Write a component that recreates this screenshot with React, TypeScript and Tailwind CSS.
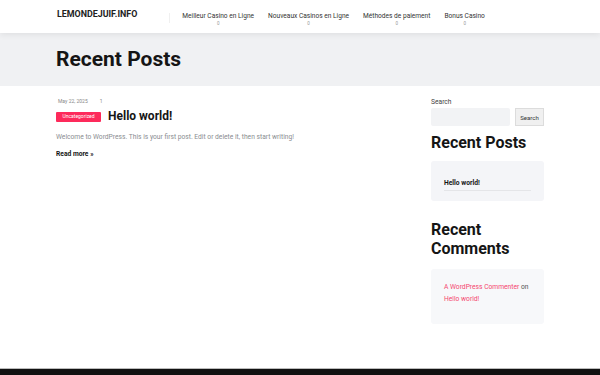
const navItems = [
  'Meilleur Casino en Ligne',
  'Nouveaux Casinos en Ligne',
  'Méthodes de paiement',
  'Bonus Casino',
]

export default function App() {
  return (
    <div className="min-h-screen bg-white font-['Roboto',sans-serif] text-[#111]">
      {/* header */}
      <header className="relative z-10 h-[33px] bg-white shadow-[0_2px_6px_rgba(0,0,0,0.07)]">
        <div className="mx-[56px] flex h-full items-start">
          <div className="mt-[8px] ml-[1px] text-[8.9px] font-bold leading-[12px] text-[#222]">
            LEMONDEJUIF.INFO
          </div>
          <div className="mt-[13px] ml-[32px] h-[10px] w-px bg-[#f0f0f0]" />
          <nav className="ml-[12px] mt-[11px] flex gap-[14px]">
            {navItems.map((item) => (
              <div key={item} className="flex flex-col items-center">
                <span className="text-[6.6px] leading-[10px] text-[#333]">{item}</span>
                <span className="text-[4.5px] leading-[5px] text-[#999]">0</span>
              </div>
            ))}
          </nav>
        </div>
      </header>

      {/* page title band */}
      <div className="h-[53px] bg-[#f0f1f3]">
        <h1 className="mx-[56px] pt-[12px] text-[21px] font-bold leading-[28px] text-[#151515]">
          Recent Posts
        </h1>
      </div>

      {/* content */}
      <div className="mx-[56px] flex gap-[21px] pb-[44px]">
        <main className="flex-1 pt-[11px]">
          <div className="ml-[2px] flex gap-[12px] text-[5px] leading-[8px] text-[#888]">
            <span>May 22, 2025</span>
            <span>1</span>
          </div>
          <div className="mt-[4px] flex items-center gap-[7px]">
            <span className="flex h-[10px] w-[45px] items-center justify-center rounded-[1px] bg-[#fd2a5b] text-[5px] text-white">
              Uncategorized
            </span>
            <h2 className="text-[12px] font-bold leading-[15px] text-[#151515]">Hello world!</h2>
          </div>
          <p className="mt-[8px] text-[6.7px] leading-[10px] text-[#8a8d91]">
            Welcome to WordPress. This is your first post. Edit or delete it, then start writing!
          </p>
          <a className="mt-[7px] block text-[6.7px] font-bold leading-[10px] text-[#151515]">
            Read more »
          </a>
        </main>

        <aside className="w-[113px] shrink-0 pt-[11px]">
          <label className="block text-[6.7px] leading-[10px] text-[#444]">Search</label>
          <div className="mt-[1px] flex h-[18px] gap-[5px]">
            <div className="w-[79px] rounded-[2px] bg-[#f2f3f5]" />
            <button className="flex w-[29px] items-center justify-center border border-[#dcdcdc] bg-[#f0f0f0] text-[6px] text-[#333]">
              Search
            </button>
          </div>
          <h3 className="mt-[7px] text-[16px] font-bold leading-[20px] text-[#151515]">Recent Posts</h3>
          <div className="mt-[8px] h-[40px] rounded-[3px] bg-[#f4f5f8] px-[13px] pt-[17px]">
            <div className="border-b border-[#e4e5e8] pb-[2px] text-[6.7px] font-bold leading-[10px] text-[#151515]">
              Hello world!
            </div>
          </div>
          <h3 className="mt-[19px] text-[16px] font-bold leading-[19px] text-[#151515]">
            Recent
            <br />
            Comments
          </h3>
          <div className="mt-[11px] h-[55px] rounded-[3px] bg-[#f7f8fa] pl-[13px] pr-[8px] pt-[12px] text-[6.7px] leading-[12px]">
            <span className="text-[#f5476f]">A WordPress Commenter</span>
            <span className="text-[#555]"> on</span>
            <br />
            <span className="text-[#f5476f]">Hello world!</span>
          </div>
        </aside>
      </div>

      {/* footer */}
      <footer className="h-[60px] border-t border-[#bbb] bg-[#111]" />
    </div>
  )
}
